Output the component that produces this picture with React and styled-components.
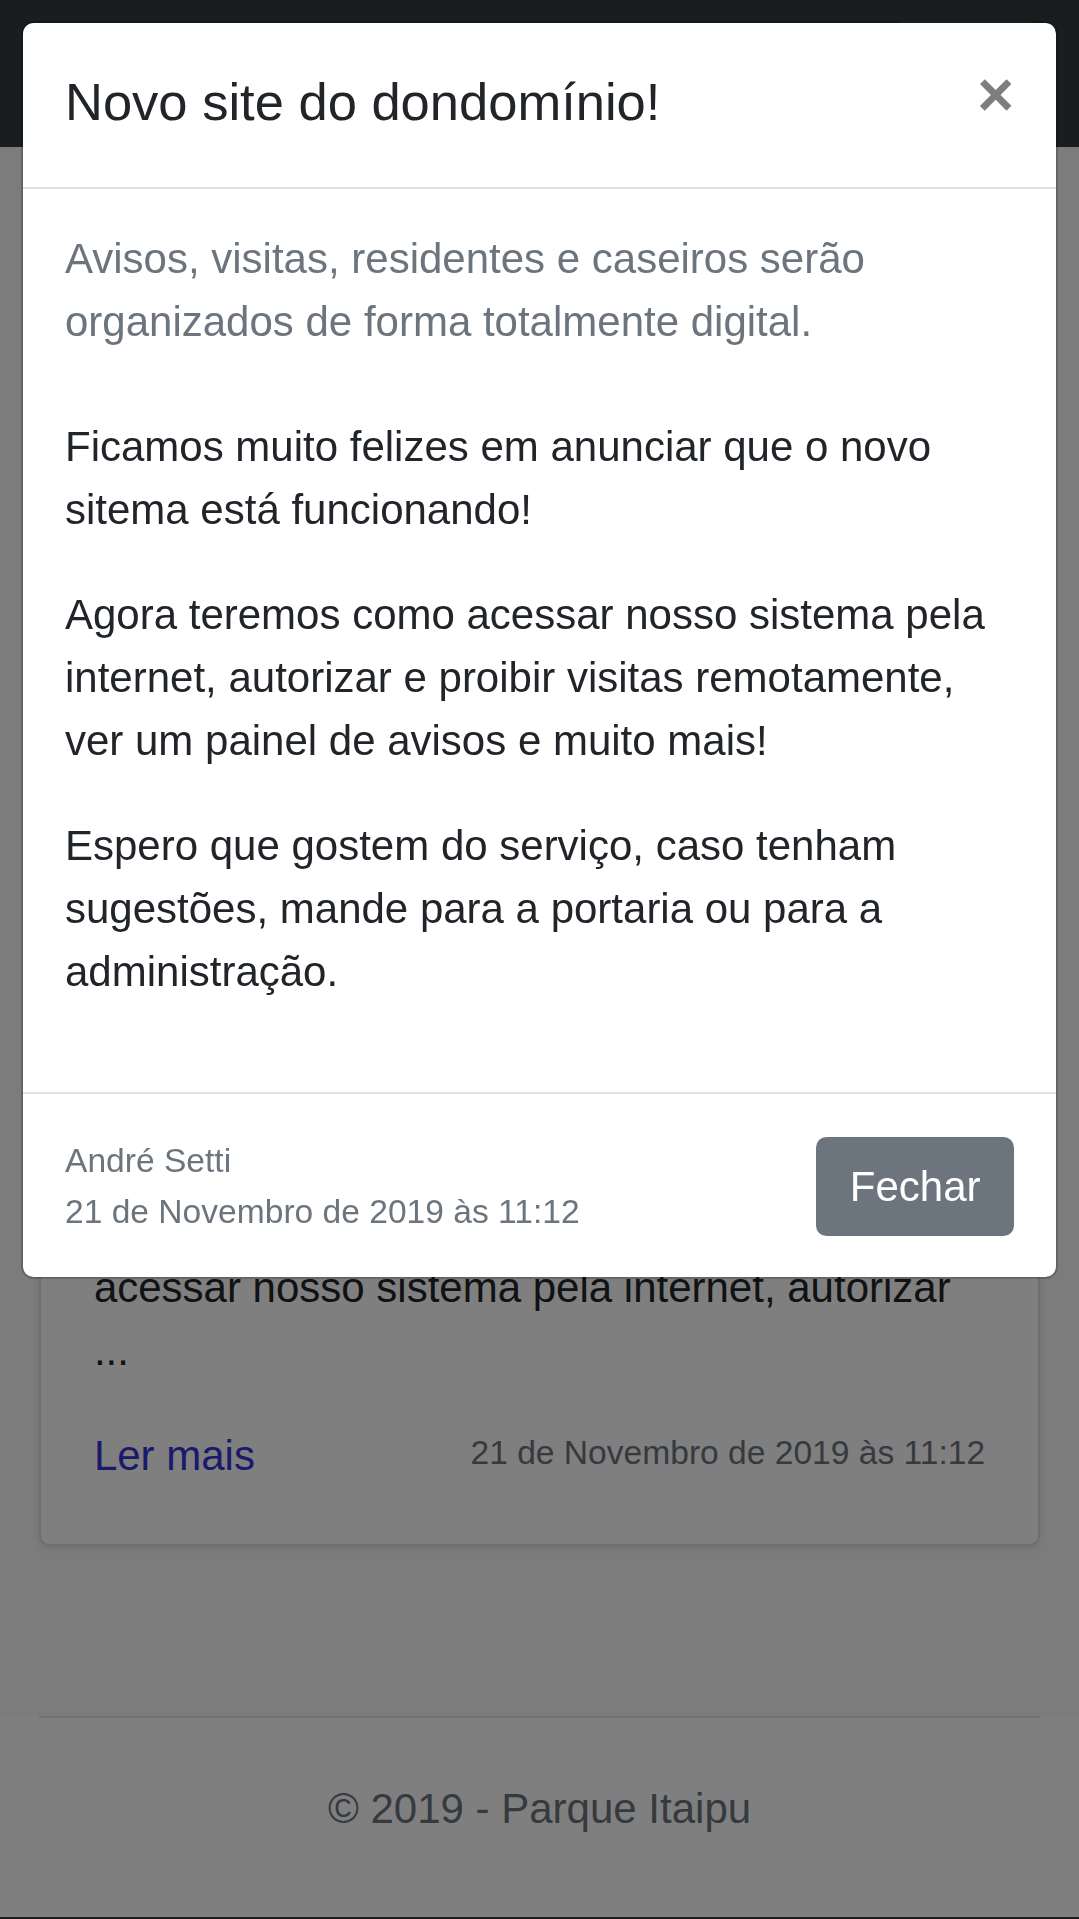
import React from "react";
import styled, { createGlobalStyle } from "styled-components";

const GlobalStyle = createGlobalStyle`
  html { background: #343a40; }
  body {
    margin: 0;
    background: #343a40;
    font-family: "Liberation Sans", Arial, sans-serif;
    font-size: 42px;
    line-height: 63px;
    color: #212529;
    overflow: hidden;
    -webkit-font-smoothing: antialiased;
  }
  * { box-sizing: border-box; }
`;

const Page = styled.div`
  display: flex;
  flex-direction: column;
`;

const Navbar = styled.nav`
  height: 147px;
  background: #343a40;
  padding: 21px 39.4px;
  display: flex;
  align-items: center;
  justify-content: space-between;
`;

const Brand = styled.a`
  color: #fff;
  font-size: 52.5px;
  line-height: 78.75px;
  text-decoration: none;
`;

const Toggler = styled.button`
  width: 147px;
  height: 105px;
  background: transparent;
  border: 2.6px solid rgba(255, 255, 255, 0.1);
  border-radius: 10.5px;
  display: flex;
  align-items: center;
  justify-content: center;
  padding: 0;
`;

const Main = styled.main`
  background: #f8f9fa;
  padding: 63px 39.4px 0;
`;

const PageTitle = styled.h2`
  margin: 0 0 21px;
  font-size: 84px;
  line-height: 100.8px;
  font-weight: 500;
`;

const Intro = styled.p`
  margin: 0 0 418.5px;
  color: #6c757d;
`;

const CardList = styled.div`
  display: flex;
  flex-direction: column;
  margin-bottom: 169.5px;
`;

const Card = styled.article`
  background: #fff;
  border: 2.6px solid rgba(0, 0, 0, 0.125);
  border-radius: 10.5px;
  box-shadow: 0 3px 8px rgba(0, 0, 0, 0.1);
  padding: 52.5px 52.5px 57px;
`;

const CardTitle = styled.h5`
  margin: 0 0 31.5px;
  font-size: 52.5px;
  line-height: 63px;
  font-weight: 500;
`;

const CardSubtitle = styled.p`
  margin: 0 0 42px;
  color: #6c757d;
`;

const CardText = styled.p`
  margin: 0 0 42px;
`;

const CardFooterRow = styled.div`
  display: flex;
  justify-content: space-between;
  align-items: center;
`;

const ReadMore = styled.a`
  color: #3533d8;
  text-decoration: none;
`;

const SmallMuted = styled.small`
  display: block;
  font-size: 33.6px;
  line-height: 50.4px;
  color: #6c757d;
`;

const CardDate = styled(SmallMuted)`
  margin-bottom: 4.8px;
`;

const Footer = styled.footer`
  background: #fff;
  padding: 0 39.4px 29px;
`;

const FooterInner = styled.div`
  border-top: 2.6px solid #dee2e6;
  padding-top: 12.5px;
  line-height: 157.5px;
  text-align: center;
  color: #6c757d;
  white-space: nowrap;
`;

const Backdrop = styled.div`
  position: fixed;
  inset: 0;
  background: rgba(0, 0, 0, 0.5);
  z-index: 1040;
`;

const ModalRoot = styled.div`
  position: fixed;
  inset: 0;
  z-index: 1050;
  overflow: hidden;
`;

const Dialog = styled.div`
  margin: 21px;
`;

const ModalContent = styled.div`
  display: flex;
  flex-direction: column;
  background: #fff;
  background-clip: padding-box;
  border: 2.625px solid rgba(0, 0, 0, 0.2);
  border-radius: 12.6px;
`;

const ModalHeader = styled.div`
  display: flex;
  align-items: flex-start;
  justify-content: space-between;
  padding: 42px 42px 43.2px;
  border-bottom: 2.625px solid #dee2e6;
`;

const ModalTitle = styled.h5`
  margin: -2.4px 0 2.4px;
  font-size: 52.5px;
  line-height: 78.75px;
  font-weight: 400;
  color: #212529;
`;

const CloseButton = styled.button`
  padding: 42px;
  margin: -44.4px -42px -42px auto;
  background: transparent;
  border: 0;
  font-family: "Liberation Sans", Arial, sans-serif;
  font-size: 63px;
  font-weight: 700;
  line-height: 1;
  color: #000;
  opacity: 0.5;
  text-shadow: 0 1px 0 #fff;
  cursor: pointer;
`;

const ModalBody = styled.div`
  padding: 38.4px 42px 46.8px;
`;

const Lead = styled.p`
  margin: 0 0 62px;
  color: #6c757d;
`;

const Paragraph = styled.p`
  margin: 0 0 42px;
`;

const ModalFooter = styled.div`
  display: flex;
  flex-wrap: wrap;
  align-items: center;
  justify-content: flex-end;
  padding: 31.5px 31.5px 29.1px;
  border-top: 2.625px solid #dee2e6;
`;

const Meta = styled.div`
  margin: 10.5px auto 10.5px 10.5px;
`;

const SecondaryButton = styled.button`
  margin: 10.5px;
  padding: 15.75px 31.5px;
  font-family: "Liberation Sans", Arial, sans-serif;
  font-size: 42px;
  line-height: 63px;
  color: #fff;
  background: #6c757d;
  border: 2.625px solid #6c757d;
  border-radius: 10.5px;
  cursor: pointer;
`;

const HamburgerIcon = () => (
  <svg width="79" height="79" viewBox="0 0 30 30" aria-hidden="true">
    <path
      d="M4 7h22M4 15h22M4 23h22"
      stroke="rgba(255,255,255,0.5)"
      strokeWidth="2"
      strokeLinecap="round"
    />
  </svg>
);

const DATE = "21 de Novembro de 2019 às 11:12";

export default function App() {
  return (
    <>
      <GlobalStyle />
      <Page>
        <Navbar>
          <Brand href="#">Parque Itaipu</Brand>
          <Toggler aria-label="Menu">
            <HamburgerIcon />
          </Toggler>
        </Navbar>
        <Main>
          <PageTitle>Avisos</PageTitle>
          <Intro>Fique por dentro das novidades.</Intro>
          <CardList>
            <Card>
              <CardTitle>Novo site do dondomínio!</CardTitle>
              <CardSubtitle>
                Avisos, visitas, residentes e caseiros serão organizados de
                forma totalmente digital.
              </CardSubtitle>
              <CardText>
                Ficamos muito felizes em anunciar que o novo sitema está
                funcionando! Agora teremos como acessar nosso sistema pela
                internet, autorizar ...
              </CardText>
              <CardFooterRow>
                <ReadMore href="#">Ler mais</ReadMore>
                <CardDate>{DATE}</CardDate>
              </CardFooterRow>
            </Card>
          </CardList>
        </Main>
        <Footer>
          <FooterInner>© 2019 - Parque Itaipu</FooterInner>
        </Footer>
      </Page>

      <Backdrop />
      <ModalRoot role="dialog" aria-modal="true">
        <Dialog>
          <ModalContent>
            <ModalHeader>
              <ModalTitle>Novo site do dondomínio!</ModalTitle>
              <CloseButton aria-label="Fechar">×</CloseButton>
            </ModalHeader>
            <ModalBody>
              <Lead>
                Avisos, visitas, residentes e caseiros serão organizados de
                forma totalmente digital.
              </Lead>
              <Paragraph>
                Ficamos muito felizes em anunciar que o novo sitema está
                funcionando!
              </Paragraph>
              <Paragraph>
                Agora teremos como acessar nosso sistema pela internet,
                autorizar e proibir visitas remotamente, ver um painel de
                avisos e muito mais!
              </Paragraph>
              <Paragraph>
                Espero que gostem do serviço, caso tenham sugestões, mande para
                a portaria ou para a administração.
              </Paragraph>
            </ModalBody>
            <ModalFooter>
              <Meta>
                <SmallMuted>André Setti</SmallMuted>
                <SmallMuted>{DATE}</SmallMuted>
              </Meta>
              <SecondaryButton>Fechar</SecondaryButton>
            </ModalFooter>
          </ModalContent>
        </Dialog>
      </ModalRoot>
    </>
  );
}
